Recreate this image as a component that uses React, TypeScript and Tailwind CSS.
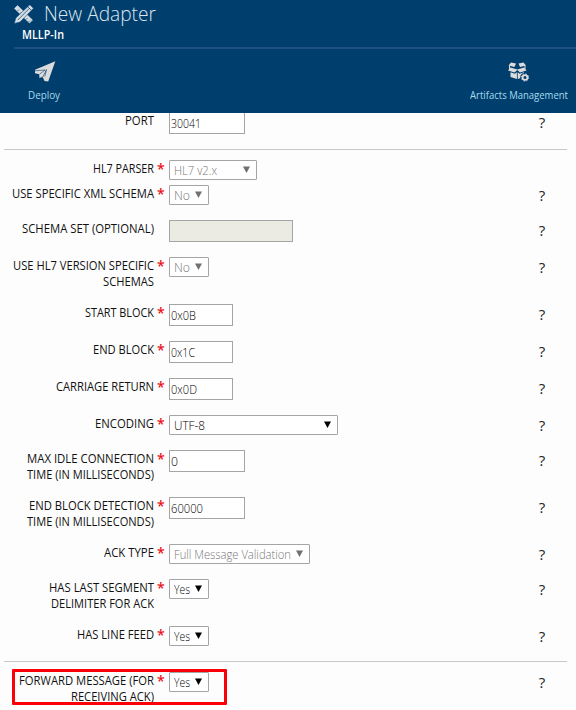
import { useLayoutEffect, useRef, useState } from "react";

function Fit({ text, width, className = "" }: { text: string; width: number; className?: string }) {
  const ref = useRef<HTMLSpanElement>(null);
  const [scale, setScale] = useState(1);
  useLayoutEffect(() => {
    const el = ref.current;
    if (el && el.offsetWidth) setScale(width / el.getBoundingClientRect().width);
  }, [width]);
  return (
    <span className={`block shrink-0 whitespace-nowrap ${className}`} style={{ width }}>
      <span ref={ref} className="inline-block origin-left" style={{ transform: `scaleX(${scale})` }}>
        {text}
      </span>
    </span>
  );
}

type Line = [string, number];
type Row = {
  lines: Line[];
  kind: "input" | "select";
  box: string;
  value?: Line;
  height: string;
  required?: boolean;
  disabled?: boolean;
  help?: boolean;
};

const groups: Row[][] = [
  [{ lines: [["PORT", 29]], kind: "input", box: "w-[76px]", value: ["30041", 30], height: "h-[37px]", required: false }],
  [
    { lines: [["HL7 PARSER", 61]], kind: "select", box: "w-[88px]", value: ["HL7 v2.x", 43], height: "h-[25px]", disabled: true, help: false },
    { lines: [["USE SPECIFIC XML SCHEMA", 142]], kind: "select", box: "w-10", value: ["No", 16], height: "h-[35px]", disabled: true },
    { lines: [["SCHEMA SET (OPTIONAL)", 132]], kind: "input", box: "w-[124px]", height: "h-[37px]", required: false, disabled: true },
    { lines: [["USE HL7 VERSION SPECIFIC", 141], ["SCHEMAS", 51]], kind: "select", box: "w-10", value: ["No", 16], height: "h-[47px]", disabled: true },
    { lines: [["START BLOCK", 69]], kind: "input", box: "w-16", value: ["0x0B", 25], height: "h-[37px]" },
    { lines: [["END BLOCK", 61]], kind: "input", box: "w-16", value: ["0x1C", 24], height: "h-[37px]" },
    { lines: [["CARRIAGE RETURN", 98]], kind: "input", box: "w-16", value: ["0x0D", 26], height: "h-[37px]" },
    { lines: [["ENCODING", 59]], kind: "select", box: "w-[169px]", value: ["UTF-8", 31], height: "h-[35px]" },
    { lines: [["MAX IDLE CONNECTION", 127], ["TIME (IN MILLISECONDS)", 127]], kind: "input", box: "w-[76px]", value: ["0", 7], height: "h-[47px]" },
    { lines: [["END BLOCK DETECTION", 125], ["TIME (IN MILLISECONDS)", 127]], kind: "input", box: "w-[76px]", value: ["60000", 32], height: "h-[47px]" },
    { lines: [["ACK TYPE", 50]], kind: "select", box: "w-[141px]", value: ["Full Message Validation", 117], height: "h-[35px]", disabled: true },
    { lines: [["HAS LAST SEGMENT", 105], ["DELIMITER FOR ACK", 103]], kind: "select", box: "w-10", value: ["Yes", 16], height: "h-[47px]" },
    { lines: [["HAS LINE FEED", 77]], kind: "select", box: "w-10", value: ["Yes", 16], height: "h-[35px]" },
  ],
  [{ lines: [["FORWARD MESSAGE (FOR", 135], ["RECEIVING ACK)", 83]], kind: "select", box: "w-10", value: ["Yes", 16], height: "h-[38px]" }],
];

function Control({ row }: { row: Row }) {
  const color = row.disabled ? "text-[#777777]" : "text-black";
  if (row.kind === "input") {
    return (
      <div className={`flex h-[22px] items-center border border-[#a5a5a5] pl-px pt-px text-[13px] font-light ${row.box} ${color} ${row.disabled ? "bg-[#ebebe4]" : "bg-white"}`}>
        {row.value && <Fit text={row.value[0]} width={row.value[1]} />}
      </div>
    );
  }
  return (
    <div className={`flex h-5 items-center justify-between rounded-[1px] border border-[#a5a5a5] bg-white pl-[4px] pr-[6px] text-[13px] font-light ${row.box} ${color}`}>
      {row.value && <Fit text={row.value[0]} width={row.value[1]} className="pt-px" />}
      <svg className={`mb-px h-[7px] w-[7px] ${row.disabled ? "fill-[#707070]" : "fill-black"}`} viewBox="0 0 7 7">
        <path d="M0 .5h7L3.5 7z" />
      </svg>
    </div>
  );
}

function FormRow({ row }: { row: Row }) {
  return (
    <div className={`flex items-start ${row.height}`}>
      <div className="flex w-[154px] shrink-0 flex-col items-end text-[13px] leading-4 text-[#111111]">
        {row.lines.map(([t, w]) => (
          <Fit key={t} text={t} width={w} />
        ))}
      </div>
      <div className="w-[15px] shrink-0 pl-[3px] pt-px text-[14px] font-semibold leading-4 text-[#ee1118]">
        {row.required !== false && "*"}
      </div>
      <Control row={row} />
      {row.help !== false && (
        <div className="ml-auto mr-[30px] w-2 pt-[2px] text-center text-[15px] leading-4 text-[#222222]">?</div>
      )}
    </div>
  );
}

function ToolsIcon() {
  return (
    <svg className="h-5 w-5" viewBox="0 0 20 20">
      <path d="M3.500 1.500 18.500 16 15.500 19 .5 4.500z" fill="#d4dce2" stroke="#d4dce2" strokeWidth=".6" />
      <path d="m3.500 7 1.500-1.500M6 9.500 7.500 8M12 15.500l1.500-1.500M14.500 18l1.500-1.500" stroke="#003e6e" strokeWidth=".6" />
      <path d="m15.800.8 3.700 3.500L6 18 .3 19.500 1.800 14z" fill="#d4dce2" stroke="#003e6e" strokeWidth=".5" />
      <path d="M3.800 16 15.500 4.200" stroke="#003e6e" strokeWidth=".7" />
      <path d="m13.800 2.800 3.600 3.500" stroke="#003e6e" strokeWidth=".7" />
    </svg>
  );
}

function PlaneIcon() {
  return (
    <svg className="h-[21px] w-[21px]" viewBox="0 0 21 21">
      <path d="M20.300.2 0 8.800v3.400l4.200 1 .3 4 3.300-1 1.700 3.800 3.700.5z" fill="#dcdcdc" />
      <path d="M0 9.800 10 9M10 9l-5.500 4.200M11.500 8.500 8 15.800l-3.500 1.400" fill="none" stroke="#003e6e" strokeWidth=".6" />
      <path d="m11.500 8.500-1.700 7" stroke="#003e6e" strokeWidth=".6" />
    </svg>
  );
}

function BoxIcon() {
  return (
    <svg className="h-5 w-[22px]" viewBox="0 0 22 20">
      <path d="M3 .5 8 1.500 6.500 5 .5 3.500zM15.500.5l-5 1L12 5l6-1.500z" fill="#dcdcdc" />
      <path d="M2.500 5.500 9.300 7.500 16 5.500l2.500 3-6.500 2-2.700-2.500L6.500 10.500 0 8.500z" fill="#dcdcdc" />
      <path d="M2.500 10.300 7 11.700l1.900-1.500V17l-6.400-2zM16 10.300l-4.500 1.400-1.800-1.500V17l6.300-2z" fill="#dcdcdc" />
      <path d="M1.500 3.500v4M17 3.500v4" stroke="#dcdcdc" strokeWidth="1" />
      <circle cx="17" cy="15.500" r="4.800" fill="#003e6e" />
      <circle cx="17" cy="15.500" r="2.400" fill="none" stroke="#dcdcdc" strokeWidth="1.800" />
      <circle cx="17" cy="15.500" r="3.600" fill="none" stroke="#dcdcdc" strokeWidth="1" strokeDasharray="1.410 1.410" />
    </svg>
  );
}

export default function App() {
  return (
    <div className="h-[710px] w-[576px] overflow-hidden bg-[#fdfdfd] font-['Open_Sans','Noto_Sans',sans-serif]">
      <header className="relative z-10 flex h-[113px] flex-col bg-[#003e6e]">
        <div className="flex h-[27px] items-center pl-[14px] text-[20px] text-[#dce6ee]">
          <ToolsIcon />
          <Fit text="New Adapter" width={112} className="ml-[10px] font-light leading-[27px]" />
        </div>
        <div className="h-5 pl-[22px] text-[12px] leading-4 text-white">
          <Fit text="MLLP-In" width={42} className="font-semibold" />
        </div>
        <div className="ml-[14px] h-[2px] shrink-0 bg-[#1d5080]" />
        <div className="flex justify-between pl-[28px] pr-[8px] pt-3 text-[10px] text-[#a5dcec]">
          <div className="flex flex-col items-center">
            <div className="ml-[2px]">
              <PlaneIcon />
            </div>
            <Fit text="Deploy" width={32} className="mt-[5px] leading-4" />
          </div>
          <div className="flex flex-col items-center">
            <div className="mr-px flex h-[21px] items-end">
              <BoxIcon />
            </div>
            <Fit text="Artifacts Management" width={98} className="mt-[5px] leading-4" />
          </div>
        </div>
      </header>
      <main className="-mt-px">
        {groups.map((rows, i) => (
          <section key={i}>
            {i > 0 && <div className="mb-[10px] ml-[4px] mr-[9px] h-px bg-[#c8c8c8]" />}
            {i === 2 ? (
              <div className="relative">
                {rows.map((r) => (
                  <FormRow key={r.lines[0][0]} row={r} />
                ))}
                <div className="absolute -top-[3px] left-3 h-9 w-[215px] rounded-[1px] border-[3px] border-[#fb0007]" />
              </div>
            ) : (
              rows.map((r) => <FormRow key={r.lines[0][0]} row={r} />)
            )}
          </section>
        ))}
      </main>
    </div>
  );
}
